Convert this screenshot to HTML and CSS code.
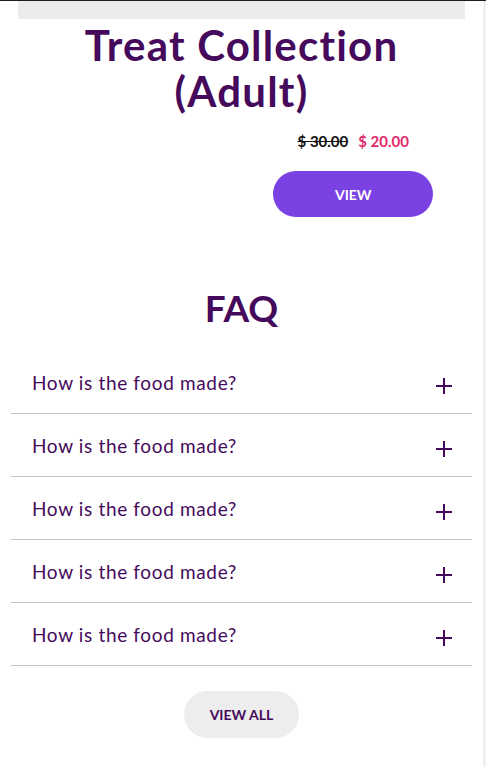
FILE: index.html
```html
<!DOCTYPE html>
<html lang="en">
<head>
<meta charset="utf-8">
<title>Treat Collection</title>
<link rel="stylesheet" href="styles.css">
</head>
<body>
<div class="page">
  <section class="product">
    <div class="product-image"></div>
    <h1 class="product-title">Treat Collection (Adult)</h1>
    <div class="product-row">
      <div class="product-left"></div>
      <div class="product-right">
        <div class="price">
          <span class="price-old">$ 30.00</span>
          <span class="price-new">$ 20.00</span>
        </div>
        <a class="btn-view" href="#">VIEW</a>
      </div>
    </div>
  </section>

  <section class="faq">
    <h2 class="faq-title">FAQ</h2>
    <ul class="faq-list">
      <li class="faq-item"><span class="faq-q">How is the food made?</span><span class="faq-plus"></span></li>
      <li class="faq-item"><span class="faq-q">How is the food made?</span><span class="faq-plus"></span></li>
      <li class="faq-item"><span class="faq-q">How is the food made?</span><span class="faq-plus"></span></li>
      <li class="faq-item"><span class="faq-q">How is the food made?</span><span class="faq-plus"></span></li>
      <li class="faq-item"><span class="faq-q">How is the food made?</span><span class="faq-plus"></span></li>
    </ul>
    <div class="faq-more"><a class="btn-all" href="#">VIEW ALL</a></div>
  </section>
</div>
</body>
</html>
```

FILE: styles.css
```css
* { box-sizing: border-box; }
html, body { margin: 0; padding: 0; }
body {
  background: #ffffff;
  border-top: 1px solid #1e1e1e;
  font-family: Lato, "Liberation Sans", sans-serif;
  color: #450a5c;
}
.page {
  width: 486px;
  min-height: 766px;
  border-right: 3px solid #f0f0f0;
  overflow: hidden;
}
.product {
  padding: 0 18px;
}
.product-image {
  height: 18px;
  background: #ececec;
}
.product-title {
  max-width: 360px;
  margin: 3px auto 0;
  font-size: 42px;
  line-height: 46px;
  font-weight: 700;
  letter-spacing: 1.2px;
  text-align: center;
  color: #450a5c;
}
.product-row {
  display: flex;
  margin-top: 17px;
}
.product-left, .product-right {
  flex: 1 1 0;
}
.product-right {
  display: flex;
  flex-direction: column;
  align-items: center;
}
.price {
  display: flex;
  gap: 10px;
  font-size: 15px;
  line-height: 20px;
  font-weight: 700;
}
.price-old {
  color: #111111;
  text-decoration: line-through;
}
.price-new {
  color: #e3296a;
}
.btn-view {
  margin-top: 20px;
  width: 160px;
  height: 46px;
  border-radius: 23px;
  background: #7b42e3;
  color: #ffffff;
  font-size: 14px;
  font-weight: 700;
  text-decoration: none;
  display: flex;
  align-items: center;
  justify-content: center;
}
.faq {
  padding: 0 11px;
}
.faq-title {
  margin: 69px 0 0;
  font-size: 37px;
  line-height: 44px;
  font-weight: 700;
  text-align: center;
}
.faq-list {
  list-style: none;
  margin: 21px 0 0;
  padding: 0;
}
.faq-item {
  height: 63px;
  border-bottom: 1px solid #c4c4c4;
  display: flex;
  align-items: center;
  justify-content: space-between;
  padding: 0 20px 0 21px;
}
.faq-q {
  font-size: 19px;
  font-weight: 400;
  letter-spacing: 0.65px;
}
.faq-plus {
  position: relative;
  width: 16px;
  height: 16px;
  margin-top: 8px;
}
.faq-plus::before, .faq-plus::after {
  content: "";
  position: absolute;
  background: #450a5c;
}
.faq-plus::before {
  left: 0; right: 0; top: 7px; height: 2px;
}
.faq-plus::after {
  top: 0; bottom: 0; left: 7px; width: 2px;
}
.faq-more {
  display: flex;
  justify-content: center;
  margin-top: 25px;
}
.btn-all {
  width: 115px;
  height: 47px;
  border-radius: 24px;
  background: #ededed;
  color: #450a5c;
  font-size: 14px;
  font-weight: 700;
  text-decoration: none;
  display: flex;
  align-items: center;
  justify-content: center;
}
```
